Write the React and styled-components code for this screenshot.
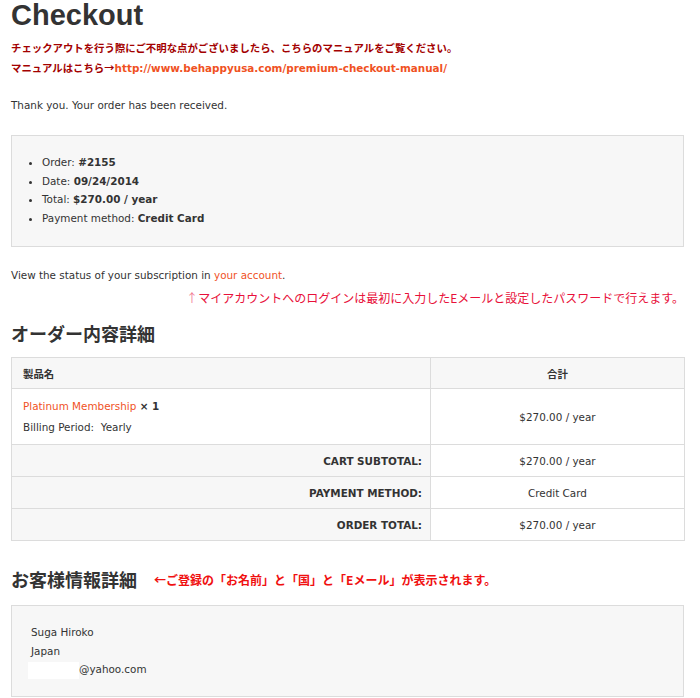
import React from 'react';
import styled, { createGlobalStyle } from 'styled-components';

const GlobalStyle = createGlobalStyle`
	html, body {
		margin: 0;
		padding: 0;
		background: #fff;
	}
	body {
		font-family: "DejaVu Sans", Verdana, "Noto Sans CJK JP", sans-serif;
		font-size: 10.4px;
		color: #333;
	}
`;

const colors = {
	text: '#333',
	border: '#dcdcdc',
	panel: '#f7f7f7',
	link: '#f0521f',
	darkRed: '#a30000',
	red: '#e8103a',
	pink: '#f27a95',
};

const orderInfo = [
	['Order:', '#2155'],
	['Date:', '09/24/2014'],
	['Total:', '$270.00 / year'],
	['Payment method:', 'Credit Card'],
];

const totals = [
	['CART SUBTOTAL:', '$270.00 / year'],
	['PAYMENT METHOD:', 'Credit Card'],
	['ORDER TOTAL:', '$270.00 / year'],
];

export default function App() {
	return (
		<Page>
			<GlobalStyle />
			<Title>Checkout</Title>
			<Notice>
				<p>チェックアウトを行う際にご不明な点がございましたら、こちらのマニュアルをご覧ください。</p>
				<p>
					マニュアルはこちら→<NoticeLink href="#">http://www.behappyusa.com/premium-checkout-manual/</NoticeLink>
				</p>
			</Notice>
			<Thanks>Thank you. Your order has been received.</Thanks>

			{/* Order overview */}
			<Panel>
				<InfoList>
					{orderInfo.map(([label, value]) => (
						<li key={label}>
							{label} <strong>{value}</strong>
						</li>
					))}
				</InfoList>
			</Panel>

			<Status>
				View the status of your subscription in <Link href="#">your account</Link>.
			</Status>
			<LoginNote>
				<Arrow>↑</Arrow>マイアカウントへのログインは最初に入力したEメールと設定したパスワードで行えます。
			</LoginNote>

			<SectionTitle>オーダー内容詳細</SectionTitle>
			<OrderTable>
				<thead>
					<tr>
						<Th>製品名</Th>
						<Th center>合計</Th>
					</tr>
				</thead>
				<tbody>
					<tr>
						<ItemCell>
							<Link href="#">Platinum Membership</Link> <strong>× 1</strong>
							<Meta>Billing Period:&nbsp;&nbsp;Yearly</Meta>
						</ItemCell>
						<Td center>$270.00 / year</Td>
					</tr>
				</tbody>
				<tfoot>
					{totals.map(([label, value]) => (
						<tr key={label}>
							<FootLabel>{label}</FootLabel>
							<Td center>{value}</Td>
						</tr>
					))}
				</tfoot>
			</OrderTable>

			<SectionRow>
				<SectionTitle as="h2" inline>お客様情報詳細</SectionTitle>
				<CustomerNote>←ご登録の「お名前」と「国」と「Eメール」が表示されます。</CustomerNote>
			</SectionRow>
			<Panel customer>
				<Address>
					<span>Suga Hiroko</span>
					<span>Japan</span>
					<span>
						<Mask />@yahoo.com
					</span>
				</Address>
			</Panel>
		</Page>
	);
}

const Page = styled.div`
	width: 673px;
	padding: 0 0 0 11px;
`;

const Title = styled.h1`
	margin: 0;
	font-family: "Liberation Sans", Arial, sans-serif;
	font-size: 29px;
	font-weight: 700;
	line-height: 30px;
	color: ${colors.text};
`;

const Notice = styled.div`
	margin-top: 8px;
	font-family: "Noto Sans CJK JP", sans-serif;
	font-size: 10.4px;
	font-weight: 700;
	line-height: 20px;
	color: ${colors.darkRed};
	p {
		margin: 0;
	}
`;

const NoticeLink = styled.a`
	font-family: "DejaVu Sans", Verdana, sans-serif;
	font-size: 10.4px;
	color: ${colors.link};
	text-decoration: none;
`;

const Thanks = styled.p`
	margin: 17px 0 0;
	line-height: 20px;
`;

const Panel = styled.div`
	margin-top: ${(p) => (p.customer ? '14px' : '20px')};
	height: ${(p) => (p.customer ? '92px' : '112px')};
	box-sizing: border-box;
	padding: ${(p) => (p.customer ? '17px 19px' : '17px 10px')};
	background: ${colors.panel};
	border: 1px solid ${colors.border};
`;

const InfoList = styled.ul`
	margin: 0;
	padding-left: 20px;
	line-height: 18.7px;
	strong {
		font-weight: 700;
	}
`;

const Status = styled.p`
	margin: 18px 0 0;
	line-height: 20px;
`;

const Link = styled.a`
	color: ${colors.link};
	text-decoration: none;
`;

const LoginNote = styled.p`
	margin: 4px 0 0;
	text-align: right;
	font-family: "Noto Sans CJK JP", sans-serif;
	font-size: 12px;
	line-height: 18px;
	color: ${colors.red};
`;

const Arrow = styled.span`
	color: ${colors.pink};
`;

const SectionTitle = styled.h2`
	margin: ${(p) => (p.inline ? '0' : '14px 0 0')};
	font-family: "Noto Sans CJK JP", sans-serif;
	font-size: 18px;
	font-weight: 700;
	line-height: 24px;
	color: ${colors.text};
`;

const OrderTable = styled.table`
	width: 674px;
	margin-top: 12px;
	border-collapse: collapse;
	border: 1px solid ${colors.border};
	td, th {
		border: 1px solid ${colors.border};
	}
	tfoot td, tfoot th {
		height: 31px;
	}
`;

const Th = styled.th`
	height: 31px;
	width: ${(p) => (p.center ? '254px' : 'auto')};
	padding: 0 11px;
	box-sizing: border-box;
	background: ${colors.panel};
	font-family: "DejaVu Sans", "Noto Sans CJK JP", sans-serif;
	font-size: 10.4px;
	font-weight: 700;
	text-align: ${(p) => (p.center ? 'center' : 'left')};
`;

const Td = styled.td`
	padding: 0 11px;
	background: #fff;
	text-align: ${(p) => (p.center ? 'center' : 'left')};
`;

const ItemCell = styled.td`
	height: 55px;
	padding: 0 11px;
	line-height: 21px;
	strong {
		font-weight: 700;
	}
`;

const Meta = styled.div``;

const FootLabel = styled.th`
	padding: 0 8px;
	background: ${colors.panel};
	text-align: right;
	font-weight: 700;
`;

const SectionRow = styled.div`
	display: flex;
	align-items: center;
	gap: 17px;
	margin-top: 26px;
`;

const CustomerNote = styled.span`
	font-family: "Noto Sans CJK JP", sans-serif;
	font-size: 12px;
	font-weight: 700;
	color: #f01010;
`;

const Address = styled.div`
	display: flex;
	flex-direction: column;
	line-height: 18.5px;
`;

const Mask = styled.span`
	display: inline-block;
	width: 51px;
	height: 17px;
	margin-left: -3px;
	vertical-align: middle;
	background: #fff;
`;
